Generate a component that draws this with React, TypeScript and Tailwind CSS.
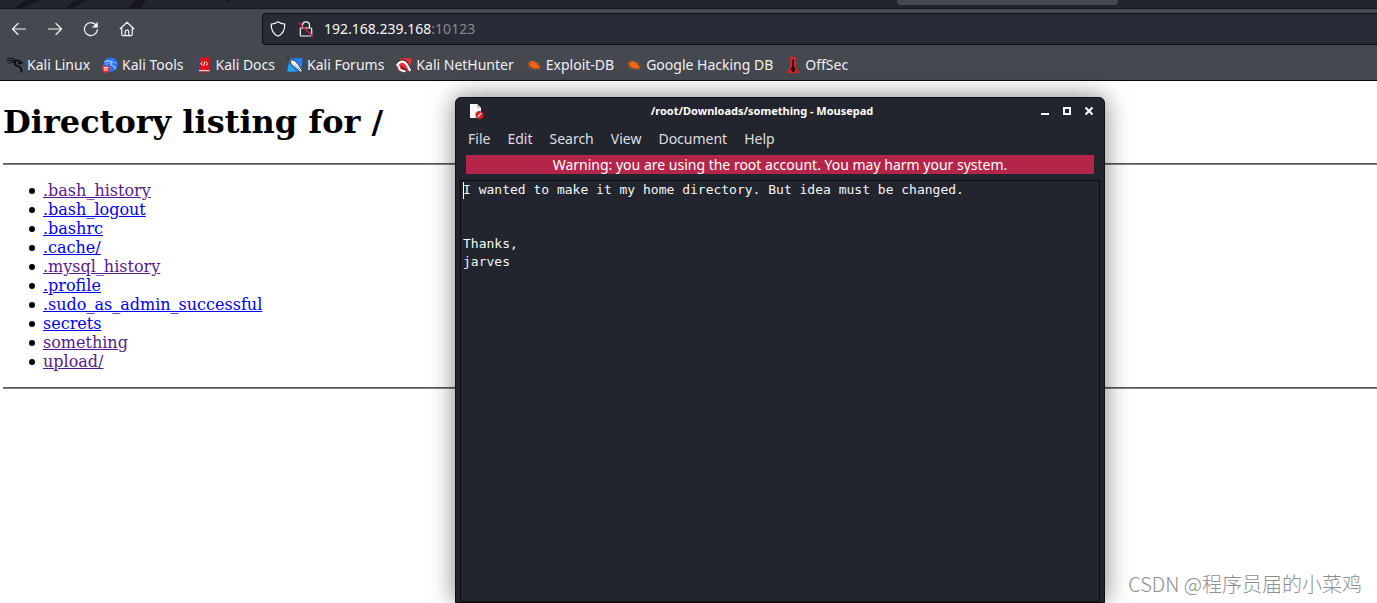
import React from 'react';

const KaliDragon = () => (
  <svg viewBox="0 0 16 16" className="h-4 w-4" fill="none" stroke="#08090b" strokeLinecap="round">
    <path d="M0.5 1.5C3 .8 7 1.2 9.5 3.6M.3 4C3.3 2.8 6 3 8 4.4M1.8 6.4C4.5 4.6 6.6 4.6 8.3 5" strokeWidth="1" />
    <path d="M8.8 3.8C6.8 5.6 7.6 8.3 10 8.8c3 .6 4.7 2.3 4.6 6.2" strokeWidth="1.6" />
    <path d="M9 3.6c2-.6 3.4.1 4.2 1.2l1.8.6-1.2 1.2-2.6-.6" strokeWidth="1.5" />
  </svg>
);

const KaliTools = () => (
  <svg viewBox="0 0 16 16" className="h-4 w-4" fill="none">
    <circle cx="8.5" cy="7.6" r="7.2" fill="#2777ff" />
    <path d="M2.5 5c4-1.700 6.500-1.500 8 .4M10 5.300c-2 1.400-1 3 .6 3.500 2 .6 2.800 1.800 3 3.400" stroke="#b9d4ff" strokeWidth="1.1" />
    <path d="M3 7.400c3-1.200 4.700-1.200 6-.9M10.500 5.300l3 .5 1 1.200" stroke="#8fbaff" strokeWidth=".8" />
    <circle cx="3.8" cy="12" r="3.8" fill="#e92e36" />
    <path d="M1.5 10.5h4.600M2.900 10.500v3.500M4.900 10.500v3.500" stroke="#fff" strokeWidth=".9" />
  </svg>
);

const KaliDocs = () => (
  <svg viewBox="0 0 16 16" className="h-4 w-4" fill="none">
    <path d="M1 .5h3v15H1z" fill="#155589" />
    <path d="M3 .5h10.500v12.500H3z" fill="#e30e15" />
    <path d="M3 13h10.500v1.500H3z" fill="#f2d8d8" />
    <path d="M3 14.500h10.500v1H3z" fill="#b40c12" />
    <path d="M6.5 5 4.700 6.700l1.800 1.700M10.100 5l1.800 1.700-1.800 1.700M9 4.500 7.600 8.900" stroke="#fff" strokeWidth="1" />
  </svg>
);

const KaliForums = () => (
  <svg viewBox="0 0 16 16" className="h-4 w-4">
    <path d="M3 1.2h12.7L14.2 14.6H.3z" fill="#2a7df5" />
    <path d="M.3 14.6 2 6l7 8.6z" fill="#22a4ee" />
    <path d="M0 .5l4 2.6 3.6.3 3.5 4.2 3.7 5.7.7 2-2.4-.6-5.5-4.6-3.4-3.1-.9-3.4z" fill="#fff" stroke="#10161e" strokeWidth=".7" />
    <path d="M7.4 7.5l5.6 5.7" stroke="#555" strokeWidth=".6" />
  </svg>
);

const NetHunter = () => (
  <svg viewBox="0 0 16 16" className="h-4 w-4" fill="none">
    <path d="M4 1.200h11.700L13.800 14H2z" fill="#ef2f35" />
    <path d="M.8 6.500C2.500 2.500 6.500 1.800 10 4.300c2.300 1.700 3.200 5 5.500 9.500" stroke="#16181c" strokeWidth="1.2" />
    <path d="M1 9C2.500 4.500 6 3.800 9 5.500c2.500 1.500 3 4.500 5.300 8.300" stroke="#fff" strokeWidth="2.3" />
    <path d="M2.500 8.500C2.300 12 5 14.500 9.500 14.300" stroke="#fff" strokeWidth="2" />
    <path d="M5.500 9c.5 2.500 2.500 3.600 5.500 3.800" stroke="#25272c" strokeWidth="1.2" />
  </svg>
);

const ExploitBug = () => (
  <svg viewBox="0 0 16 16" className="h-4 w-4" fill="none">
    <ellipse cx="7.5" cy="7.8" rx="5" ry="3.4" transform="rotate(25 7.5 7.8)" fill="#ef6414" />
    <circle cx="11.700" cy="10" r="2" fill="#ef6414" />
    <path d="M5 6.5 3.8 3.6M8 5.5l.7-2.3M10.5 7l3.2-1.6M12.8 9l2.8-.3M3.8 7.5.8 6.4M4.2 9.5l-3 1.6M6.5 11l-2.2 2M9.5 11.5v2.2M12.5 11.5l1.5 2" stroke="#ad5522" strokeWidth=".9" />
  </svg>
);

const OffSecIcon = () => (
  <svg viewBox="0 0 16 16" className="h-4 w-4">
    <path d="M5.200 0h5.600v9.500l3.700 6.500H1.500l3.700-6.500z" fill="#d8232a" />
    <path d="M7.200 2.500h1.800v7l1.800 2.800-1.500 1.100.2 1.600H6.700l.1-1.600-1.500-1.100 1.900-2.800z" fill="#260d10" />
  </svg>
);

const bookmarks = [
  { label: 'Kali Linux', icon: <KaliDragon /> },
  { label: 'Kali Tools', icon: <KaliTools /> },
  { label: 'Kali Docs', icon: <KaliDocs /> },
  { label: 'Kali Forums', icon: <KaliForums /> },
  { label: 'Kali NetHunter', icon: <NetHunter /> },
  { label: 'Exploit-DB', icon: <ExploitBug /> },
  { label: 'Google Hacking DB', icon: <ExploitBug /> },
  { label: 'OffSec', icon: <OffSecIcon /> },
];

const files = [
  { name: '.bash_history', visited: true },
  { name: '.bash_logout', visited: false },
  { name: '.bashrc', visited: false },
  { name: '.cache/', visited: false },
  { name: '.mysql_history', visited: true },
  { name: '.profile', visited: false },
  { name: '.sudo_as_admin_successful', visited: false },
  { name: 'secrets', visited: false },
  { name: 'something', visited: true },
  { name: 'upload/', visited: true },
];

const menus = ['File', 'Edit', 'Search', 'View', 'Document', 'Help'];

const note = 'I wanted to make it my home directory. But idea must be changed.\n\n\nThanks,\njarves';

const iconProps = {
  viewBox: '0 0 16 16',
  className: 'h-4 w-4',
  fill: 'none',
  stroke: '#f4f4f6',
  strokeWidth: 1.2,
  strokeLinecap: 'round' as const,
  strokeLinejoin: 'round' as const,
};

const TabStrip = () => (
  <div className="relative h-[9px] overflow-hidden border-b border-[#15171c] bg-[#23252e]">
    <svg viewBox="0 0 240 8" className="h-2 w-60" fill="#15171d">
      <path d="M26 0h15L22 8h-8zM75 0h14L73 8h-8zM135 0h11l-5 8h-13zM224 0h6v2z" />
    </svg>
    <div className="absolute top-0 right-[259px] h-[5px] w-[221px] rounded-b-sm bg-[#45484e]" />
  </div>
);

const Toolbar = () => (
  <div className="flex h-10 items-center">
    <div className="flex w-[262px] shrink-0 items-center gap-5 pl-[11px]">
      <button aria-label="Back">
        <svg {...iconProps}><path d="M1.5 8h13M7 2.5 1.5 8 7 13.5" /></svg>
      </button>
      <button aria-label="Forward">
        <svg {...iconProps}><path d="M1.5 8h13M9 2.5 14.5 8 9 13.5" /></svg>
      </button>
      <button aria-label="Reload">
        <svg {...iconProps}>
          <path d="M13.2 4.3A6.5 6.5 0 1 0 14.4 8.6" />
          <path d="M14.5 1.5v4.8H9.7z" fill="#f4f4f6" strokeWidth=".6" />
        </svg>
      </button>
      <button aria-label="Home">
        <svg {...iconProps}>
          <path d="M1.2 7.8 8 1.2l6.8 6.6M2.7 6.6V13c0 1 .6 1.6 1.6 1.6h7.4c1 0 1.6-.6 1.6-1.6V6.6M6.2 14.4v-3.6c0-1 .8-1.6 1.8-1.6s1.8.6 1.8 1.6v3.6" />
        </svg>
      </button>
    </div>
    <div className="flex h-8 flex-1 items-center rounded-l-[4px] border border-r-0 border-[#0e1016] bg-[#282a35] pl-[7px]">
      <svg {...iconProps}>
        <path d="M8 .8c2 1.5 4.3 2.2 6.8 2.3.2 5.3-1.6 9.8-6.8 12.1C2.800 12.900 1 8.400 1.200 3.100 3.700 3 6 2.300 8 .8z" />
      </svg>
      <svg {...iconProps} className="ml-3 h-4 w-4">
        <path d="M4.500 7V4.300a3.500 3.500 0 0 1 7 0V7M3.300 7h9.400c.7 0 1 .4 1 1v5.800c0 .7-.4 1.200-1 1.200H3.300c-.7 0-1-.5-1-1.200V8c0-.6.3-1 1-1z" />
        <path d="M1 2l13.500 13" stroke="#e2143f" strokeWidth="1.500" />
      </svg>
      <button className="ml-[10px] text-sm leading-5 text-[#f8f8fa]">
        192.168.239.168<span className="text-[#898a91]">:10123</span>
      </button>
    </div>
  </div>
);

const Bookmarks = () => (
  <nav className="flex h-8 items-center gap-3 border-b border-[#08090d] pt-px pl-[7px]">
    {bookmarks.map((item) => (
      <a key={item.label} href="#" className="flex items-center gap-1 text-sm leading-5 whitespace-nowrap text-[#f0f0f2]">
        {item.icon}
        {item.label}
      </a>
    ))}
  </nav>
);

const DirectoryListing = () => (
  <main className="pt-[22px] pl-[3px] font-['DejaVu_Serif',serif] text-black">
    <h1 className="text-[32px] leading-[38px] font-bold">Directory listing for /</h1>
    <hr className="mt-[22px] border-t border-b border-t-[#555555] border-b-[#858585]" />
    <ul className="my-4 pl-[26px] text-base leading-[19px]">
      {files.map((file) => (
        <li
          key={file.name}
          className="flex items-center gap-2 before:h-[6px] before:w-[6px] before:rounded-full before:bg-black before:content-['']"
        >
          <a href="#" className={file.visited ? 'text-[#551a8b] underline' : 'text-[#0000ee] underline'}>
            {file.name}
          </a>
        </li>
      ))}
    </ul>
    <hr className="border-t border-b border-t-[#555555] border-b-[#858585]" />
  </main>
);

const Mousepad = () => (
  <section className="absolute top-[97px] bottom-0 left-[455px] flex w-[650px] flex-col rounded-t-md border border-[#0d0f15] bg-[#23252e] px-1 shadow-[0_0_24px_rgba(0,0,0,0.5)]">
    <header className="flex h-[26px] shrink-0 items-center pr-[6px] pl-2">
      <svg viewBox="0 0 16 16" className="h-4 w-4">
        <path d="M2 1h7l4 4v10H2z" fill="#fff" />
        <path d="M9 1v4h4z" fill="#c9cacc" />
        <circle cx="11.500" cy="12" r="4" fill="#d6202a" />
        <path d="M9.800 13.800l3.400-3.600" stroke="#fff" strokeWidth="1.200" />
      </svg>
      <h2 className="flex-1 text-center text-[11px] leading-4 font-bold text-white">/root/Downloads/something - Mousepad</h2>
      <div className="flex gap-3">
        <button aria-label="Minimize">
          <svg viewBox="0 0 10 10" className="h-[10px] w-[10px]"><path d="M1 7h8v2H1z" fill="#fff" /></svg>
        </button>
        <button aria-label="Maximize">
          <svg viewBox="0 0 10 10" className="h-[10px] w-[10px]"><path d="M2 2h6v6H2z" fill="none" stroke="#fff" strokeWidth="2" /></svg>
        </button>
        <button aria-label="Close">
          <svg viewBox="0 0 10 10" className="h-[10px] w-[10px]"><path d="M1.500 1.500l7 7M8.500 1.500l-7 7" stroke="#fff" strokeWidth="2" /></svg>
        </button>
      </div>
    </header>
    <div className="flex h-[31px] shrink-0 items-center gap-[17px] pb-[2px] pl-2 text-sm text-[#dedee1]">
      {menus.map((menu) => (
        <button key={menu}>{menu}</button>
      ))}
    </div>
    <p className="mx-[6px] shrink-0 bg-[#b3264a] text-center text-sm leading-[19px] text-white">
      Warning: you are using the root account. You may harm your system.
    </p>
    <textarea
      aria-label="Document text"
      spellCheck={false}
      defaultValue={note}
      className="mt-[6px] min-h-0 flex-1 resize-none border border-[#0b0d12] bg-[#23252e] pl-[2px] font-['DejaVu_Sans_Mono',monospace] text-[13px] leading-[18px] text-[#f5f5f5] outline-none"
    />
    <span className="absolute top-[84px] left-[7px] h-[17px] w-px bg-white" />
  </section>
);

const App = () => {
  return (
    <div className="relative min-h-screen overflow-hidden bg-white font-['Noto_Sans',sans-serif]">
      <div className="bg-[#45484e]">
        <TabStrip />
        <Toolbar />
        <Bookmarks />
      </div>
      <DirectoryListing />
      <Mousepad />
      <span className="absolute right-[15px] bottom-1 font-['Noto_Sans_CJK_SC',sans-serif] text-xl leading-[30px] font-light text-[#8f8f8f]">
        CSDN @程序员届的小菜鸡
      </span>
    </div>
  );
};

export default App;
